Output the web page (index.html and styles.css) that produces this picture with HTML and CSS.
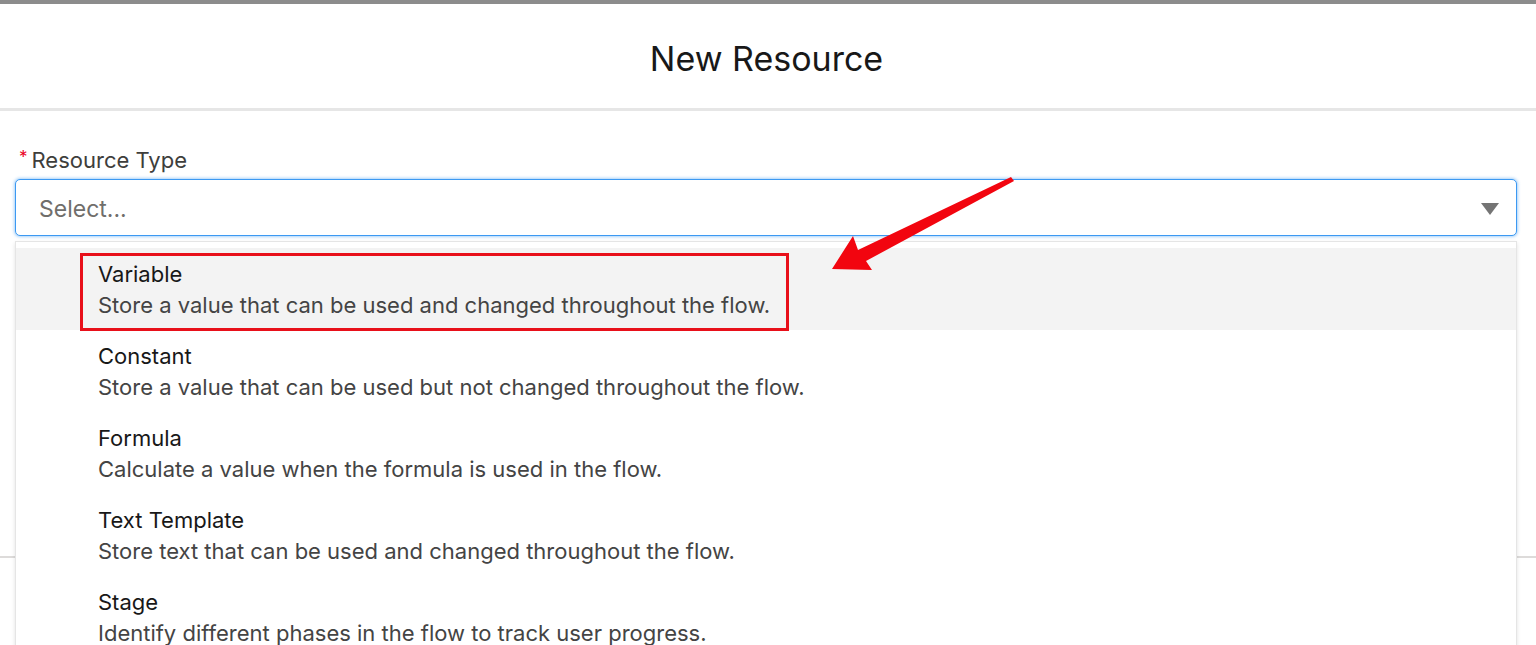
FILE: index.html
```html
<!DOCTYPE html>
<html lang="en">
<head>
<meta charset="utf-8">
<title>New Resource</title>
<link rel="stylesheet" href="styles.css">
</head>
<body>
<div class="backdrop"></div>
<div class="modal">
  <header class="modal-header">
    <h1 class="modal-title">New Resource</h1>
  </header>
  <section class="modal-body">
    <label class="field-label"><abbr class="required">*</abbr>Resource Type</label>
    <div class="combobox">
      <div class="combo-input">
        <span class="placeholder">Select...</span>
        <span class="caret"></span>
      </div>
      <ul class="listbox">
        <li class="option is-active">
          <span class="opt-title">Variable</span>
          <span class="opt-desc">Store a value that can be used and changed throughout the flow.</span>
          <span class="annot-box"></span>
        </li>
        <li class="option">
          <span class="opt-title">Constant</span>
          <span class="opt-desc">Store a value that can be used but not changed throughout the flow.</span>
        </li>
        <li class="option">
          <span class="opt-title">Formula</span>
          <span class="opt-desc">Calculate a value when the formula is used in the flow.</span>
        </li>
        <li class="option">
          <span class="opt-title">Text Template</span>
          <span class="opt-desc">Store text that can be used and changed throughout the flow.</span>
        </li>
        <li class="option">
          <span class="opt-title">Stage</span>
          <span class="opt-desc">Identify different phases in the flow to track user progress.</span>
        </li>
      </ul>
    </div>
  </section>
  <footer class="modal-footer"></footer>
</div>
<svg class="annot-arrow" width="1536" height="645" viewBox="0 0 1536 645">
  <polygon fill="#f2050f" points="832,269 853,236 858,250 1011,177 1014,181 866,261 872,270"/>
</svg>
</body>
</html>
```
FILE: styles.css
```css
* { box-sizing: border-box; }
html, body { margin: 0; padding: 0; }
body {
  width: 1536px;
  height: 645px;
  overflow: hidden;
  font-family: Inter, "Liberation Sans", Arial, sans-serif;
  background: #ffffff;
  position: relative;
}
.backdrop {
  height: 4px;
  background: #8c8c8c;
}
.modal {
  display: flex;
  flex-direction: column;
}
.modal-header {
  height: 107px;
  border-bottom: 3px solid #e6e6e6;
  display: flex;
  align-items: center;
  justify-content: center;
}
.modal-title {
  margin: 0;
  font-size: 34px;
  font-weight: 400;
  color: #181818;
  padding-top: 5px;
  padding-right: 3px;
}
.modal-body {
  height: 445px;
  padding: 35px 19px 0 15px;
}
.field-label {
  display: flex;
  align-items: center;
  height: 28px;
  font-size: 22px;
  color: #3e3e3c;
  margin-bottom: 5px;
}
.required {
  color: #ea001e;
  text-decoration: none;
  font-size: 17px;
  margin: -6px 4px 0 4px;
}
.combobox {
  position: relative;
}
.combo-input {
  height: 57px;
  border: 1.5px solid #3c99f2;
  border-radius: 5px;
  box-shadow: 0 0 3px 1px rgba(60, 153, 242, 0.45);
  display: flex;
  align-items: center;
  justify-content: space-between;
  padding: 0 17px 0 23px;
  background: #fff;
}
.placeholder {
  font-size: 23px;
  color: #706e6b;
  padding-top: 3px;
}
.caret {
  width: 0;
  height: 0;
  border-left: 9.5px solid transparent;
  border-right: 9.5px solid transparent;
  border-top: 12px solid #747474;
  margin-top: 2px;
}
.listbox {
  position: absolute;
  left: 0;
  right: 0;
  top: calc(100% + 5px);
  margin: 0;
  padding: 6px 0 0 0;
  list-style: none;
  background: #fff;
  border: 1px solid #e5e5e5;
  border-bottom: none;
  box-shadow: 0 2px 4px rgba(0, 0, 0, 0.12);
  height: 420px;
  overflow: hidden;
  z-index: 2;
}
.option {
  position: relative;
  display: flex;
  flex-direction: column;
  padding: 11.5px 0 11.5px 82px;
}
.option.is-active {
  background: #f3f3f3;
}
.opt-title {
  font-size: 22px;
  line-height: 28px;
  color: #181818;
}
.opt-desc {
  font-size: 22px;
  line-height: 28px;
  margin-top: 3px;
  color: #444444;
}
.annot-box {
  position: absolute;
  left: 64px;
  top: 5px;
  width: 709px;
  height: 78px;
  border: 3px solid #e8101a;
}
.modal-footer {
  flex: 1;
  height: 100px;
  background: #f3f3f3;
  border-top: 2px solid #dddbda;
}
.annot-arrow {
  position: absolute;
  left: 0;
  top: 0;
  pointer-events: none;
  z-index: 5;
}
```
